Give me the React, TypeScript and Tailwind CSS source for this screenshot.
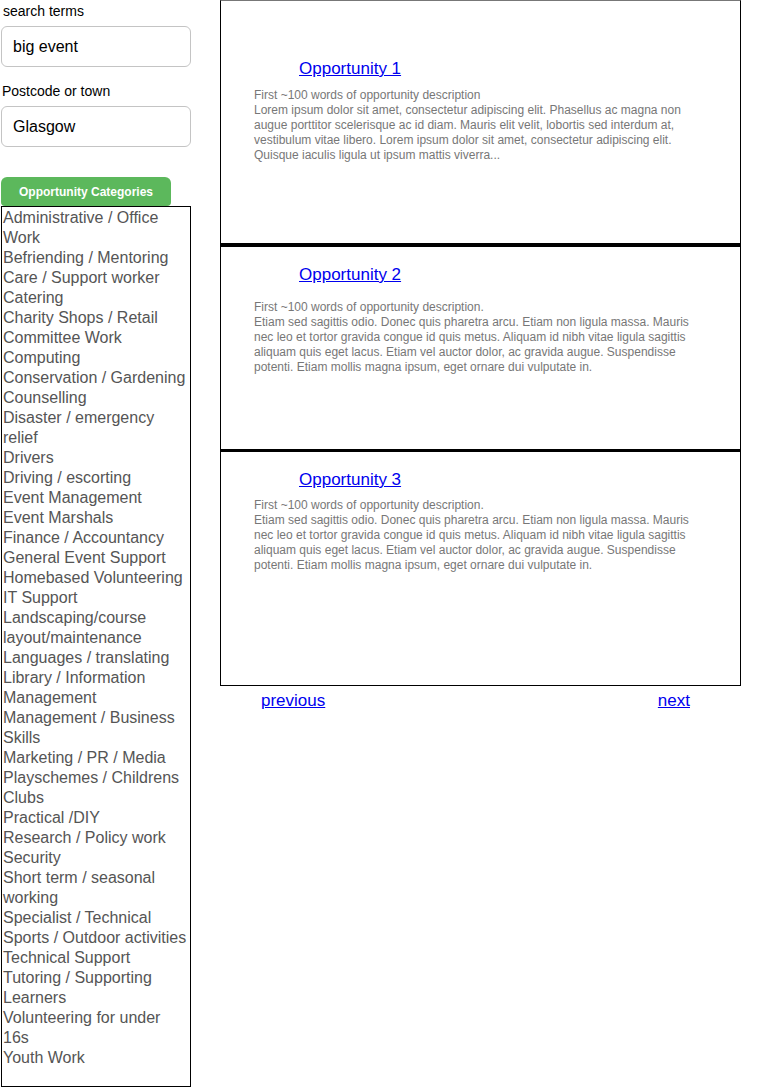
const categories = [
  'Administrative / Office Work',
  'Befriending / Mentoring',
  'Care / Support worker',
  'Catering',
  'Charity Shops / Retail',
  'Committee Work',
  'Computing',
  'Conservation / Gardening',
  'Counselling',
  'Disaster / emergency relief',
  'Drivers',
  'Driving / escorting',
  'Event Management',
  'Event Marshals',
  'Finance / Accountancy',
  'General Event Support',
  'Homebased Volunteering',
  'IT Support',
  'Landscaping/course layout/maintenance',
  'Languages / translating',
  'Library / Information Management',
  'Management / Business Skills',
  'Marketing / PR / Media',
  'Playschemes / Childrens Clubs',
  'Practical /DIY',
  'Research / Policy work',
  'Security',
  'Short term / seasonal working',
  'Specialist / Technical',
  'Sports / Outdoor activities',
  'Technical Support',
  'Tutoring / Supporting Learners',
  'Volunteering for under 16s',
  'Youth Work',
];

const lorem2 =
  'Etiam sed sagittis odio. Donec quis pharetra arcu. Etiam non ligula massa. Mauris nec leo et tortor gravida congue id quis metus. Aliquam id nibh vitae ligula sagittis aliquam quis eget lacus. Etiam vel auctor dolor, ac gravida augue. Suspendisse potenti. Etiam mollis magna ipsum, eget ornare dui vulputate in.';

const opportunities = [
  {
    title: 'Opportunity 1',
    intro: 'First ~100 words of opportunity description',
    body: 'Lorem ipsum dolor sit amet, consectetur adipiscing elit. Phasellus ac magna non augue porttitor scelerisque ac id diam. Mauris elit velit, lobortis sed interdum at, vestibulum vitae libero. Lorem ipsum dolor sit amet, consectetur adipiscing elit. Quisque iaculis ligula ut ipsum mattis viverra...',
    wrap: 'h-[242px] pt-[56px]',
    gap: 'mt-[7px]',
  },
  {
    title: 'Opportunity 2',
    intro: 'First ~100 words of opportunity description.',
    body: lorem2,
    wrap: 'h-[206px] pt-[16px] border-t-4 border-black',
    gap: 'mt-[13px]',
  },
  {
    title: 'Opportunity 3',
    intro: 'First ~100 words of opportunity description.',
    body: lorem2,
    wrap: 'flex-1 pt-[16px] border-t-[3px] border-black',
    gap: 'mt-[6px]',
  },
];

export default function App() {
  return (
    <div className="flex gap-[29px] bg-white font-['Liberation_Sans',Arial,sans-serif] w-[763px] h-[1090px]">
      {/* Sidebar */}
      <div className="w-[191px] flex flex-col">
        <label className="text-[14px] leading-[16px] text-black pl-[3px] mt-[3px]">search terms</label>
        <div className="ml-[1px] mt-[7px] h-[41px] w-[190px] rounded-md border border-[#c4c4c4] flex items-center pl-[11px] text-[16px] text-black">
          big event
        </div>
        <label className="text-[14px] leading-[16px] text-black pl-[2px] mt-[16px]">Postcode or town</label>
        <div className="ml-[1px] mt-[7px] h-[41px] w-[190px] rounded-md border border-[#c4c4c4] flex items-center pl-[11px] text-[16px] text-black">
          Glasgow
        </div>
        <button className="ml-[1px] mt-[30px] h-[29px] w-[170px] rounded-t-md rounded-b-sm bg-[#5cb85c] text-white text-[12px] font-bold">
          Opportunity Categories
        </button>
        <ul className="ml-[1px] w-[190px] h-[881px] border border-black pl-[1px] pr-[2px] pt-[1px]">
          {categories.map((c) => (
            <li key={c} className="text-[16px] leading-[20px] text-[#555]">
              {c}
            </li>
          ))}
        </ul>
      </div>

      {/* Results */}
      <div className="flex flex-col">
        <div className="w-[521px] h-[686px] border border-black border-t-[#777] flex flex-col">
          {opportunities.map((o) => (
            <div key={o.title} className={o.wrap}>
              <a href="#" className="ml-[78px] text-[17px] leading-[20px] text-[#0000ee] underline">
                {o.title}
              </a>
              <p className={`${o.gap} ml-[33px] w-[450px] text-[12px] leading-[15px] text-[#777]`}>
                {o.intro}
                <br />
                {o.body}
              </p>
            </div>
          ))}
        </div>
        <div className="flex justify-between pl-[41px] pr-[51px] mt-[5px]">
          <a href="#" className="text-[17px] leading-[20px] text-[#0000ee] underline">previous</a>
          <a href="#" className="text-[17px] leading-[20px] text-[#0000ee] underline">next</a>
        </div>
      </div>
    </div>
  );
}
